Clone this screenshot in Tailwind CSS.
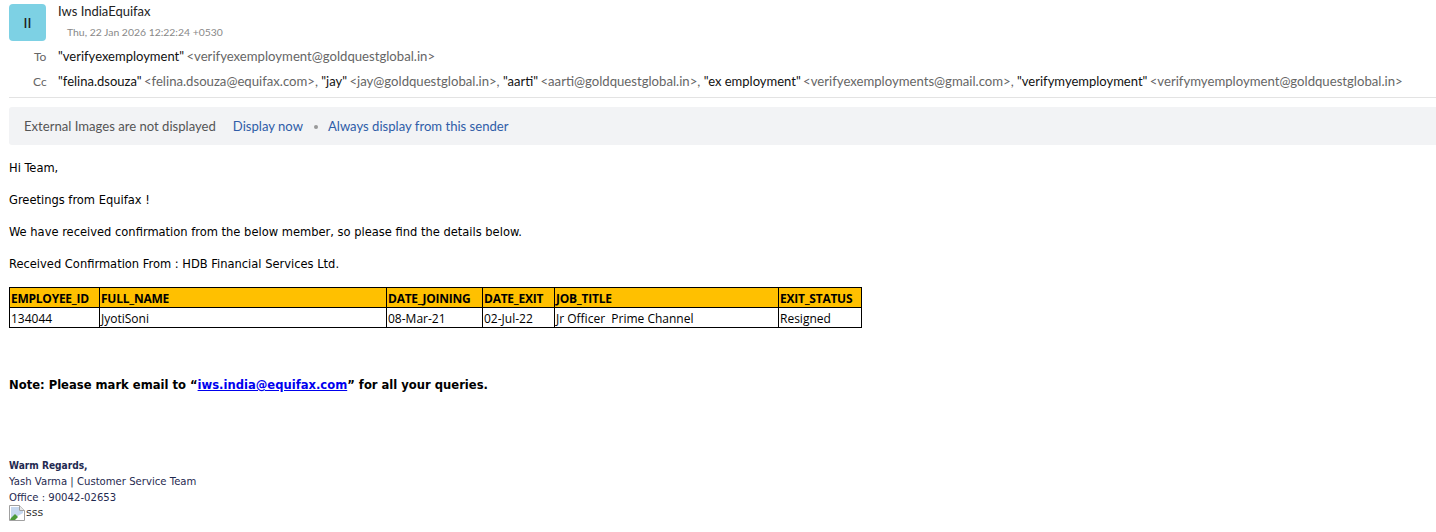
<!DOCTYPE html>
<html><head><meta charset="utf-8"><script src="https://cdn.jsdelivr.net/npm/@tailwindcss/browser@4"></script></head>
<body class="bg-white h-[532px] overflow-hidden font-['Lato',sans-serif]">
<div class="pl-[9px]">
  <div class="flex pt-1 h-[44px]">
    <div class="w-[37px] h-[37px] rounded-[4px] bg-[#7dd1e4] flex items-center justify-center text-[14px] font-medium text-[#222]">II</div>
    <div class="ml-[12px] -mt-[1px]">
      <div class="text-[13px] leading-[16px] text-[#222]">Iws IndiaEquifax</div>
      <div class="text-[10.4px] leading-[14px] text-[#888] mt-[6px] ml-[9px]">Thu, 22 Jan 2026 12:22:24 +0530</div>
    </div>
  </div>
  <div class="flex h-[25px] pt-[1px] items-center text-[13.15px] text-[#666] whitespace-nowrap">
    <div class="w-[37px] pl-[25px] text-[12px] text-[#666] shrink-0">To</div>
    <div class="ml-[12px]"><span class="text-[#111] text-[13px] mr-[-1px]">"verifyexemployment"</span> <span>&lt;verifyexemployment@goldquestglobal.in&gt;</span></div>
  </div>
  <div class="flex h-[24px] pt-[1px] items-center text-[13.15px] text-[#666] whitespace-nowrap">
    <div class="w-[37px] pl-[24px] text-[12px] text-[#666] shrink-0">Cc</div>
    <div class="ml-[12px]"><span class="text-[#111] text-[13px] mr-[-1px]">"felina.dsouza"</span> <span>&lt;felina.dsouza@equifax.com&gt;,</span> <span class="text-[#111] text-[13px] mr-[-1px]">"jay"</span> <span>&lt;jay@goldquestglobal.in&gt;,</span> <span class="text-[#111] text-[13px] mr-[-1px]">"aarti"</span> <span>&lt;aarti@goldquestglobal.in&gt;,</span> <span class="text-[#111] text-[13px] mr-[-1px]">"ex employment"</span> <span>&lt;verifyexemployments@gmail.com&gt;,</span> <span class="text-[#111] text-[13px] mr-[-1px]">"verifymyemployment"</span> <span>&lt;verifymyemployment@goldquestglobal.in&gt;</span></div>
  </div>
  <div class="border-t border-[#e3e3e3] mt-[4px]"></div>
  <div class="mt-[9px] h-[38px] bg-[#f2f3f5] rounded-l-[3px] flex items-center pl-[15px] pt-[2px] text-[13.1px]">
    <span class="text-[#555]">External Images are not displayed</span>
    <span class="ml-[17px] text-[#2f5da8]">Display now</span>
    <span class="ml-[11px] mr-[10px] w-[4px] h-[4px] rounded-full bg-[#999]"></span>
    <span class="text-[#2f5da8]">Always display from this sender</span>
  </div>
  <div class="mt-[15px] font-['DejaVu_Sans_Condensed','DejaVu_Sans',sans-serif] text-[12.78px] leading-[16px] text-[#000] flex flex-col gap-4">
    <p>Hi Team,</p>
    <p>Greetings from Equifax !</p>
    <p>We have received confirmation from the below member, so please find the details below.</p>
    <p>Received Confirmation From : HDB Financial Services Ltd.</p>
  </div>
  <table class="mt-[15px] border-collapse table-fixed w-[852px] font-['Open_Sans',sans-serif] text-[12px] leading-[16px] text-black">
    <colgroup><col class="w-[90px]"><col class="w-[287px]"><col class="w-[96px]"><col class="w-[72px]"><col class="w-[224px]"><col class="w-[83px]"></colgroup>
    <tr class="bg-[#ffc000] font-bold h-[20px] tracking-[-0.25px]">
      <td class="border border-black pl-[1px] pt-[3px] pb-0 whitespace-nowrap">EMPLOYEE_ID</td>
      <td class="border border-black pl-[1px] pt-[3px] pb-0">FULL_NAME</td>
      <td class="border border-black pl-[1px] pt-[3px] pb-0 whitespace-nowrap">DATE_JOINING</td>
      <td class="border border-black pl-[1px] pt-[3px] pb-0 whitespace-nowrap">DATE_EXIT</td>
      <td class="border border-black pl-[1px] pt-[3px] pb-0">JOB_TITLE</td>
      <td class="border border-black pl-[1px] pt-[3px] pb-0 whitespace-nowrap">EXIT_STATUS</td>
    </tr>
    <tr class="h-[20px]">
      <td class="border border-black pl-[1px] pt-[3px] pb-0">134044</td>
      <td class="border border-black pl-[1px] pt-[3px] pb-0">JyotiSoni</td>
      <td class="border border-black pl-[1px] pt-[3px] pb-0">08-Mar-21</td>
      <td class="border border-black pl-[1px] pt-[3px] pb-0">02-Jul-22</td>
      <td class="border border-black pl-[1px] pt-[3px] pb-0 whitespace-pre">Jr Officer  Prime Channel</td>
      <td class="border border-black pl-[1px] pt-[3px] pb-0">Resigned</td>
    </tr>
  </table>
  <p class="mt-[48px] font-['DejaVu_Sans_Condensed','DejaVu_Sans',sans-serif] text-[12.87px] leading-[18px] font-bold text-black">Note: Please mark email to “<a class="text-[#0000ee] underline">iws.india@equifax.com</a>” for all your queries.</p>
  <div class="mt-[64px] font-['DejaVu_Sans',sans-serif] text-[10.1px] leading-[16px] text-[#1f2a50]">
    <div class="font-bold font-['DejaVu_Sans_Condensed','DejaVu_Sans',sans-serif]">Warm Regards,</div>
    <div>Yash Varma | Customer Service Team</div>
    <div>Office : 90042-02653</div>
    <div class="flex items-center h-[16px] -mt-[1px] text-[#333] text-[11px]">
      <svg class="w-[16px] h-[16px] shrink-0" viewBox="0 0 16 16"><path d="M.5.5h10l5 5v10H.5z" fill="#fff" stroke="#a0a0a0"/><path d="M10.5.5v5h5" fill="#e8e8e8" stroke="#a0a0a0"/><path d="M2 2h8v4h4v2l-7 4-5 2z" fill="#c6d8ef"/><path d="M1 15l1-2 4-4 3 3-3 3z" fill="#4c9a3a"/></svg>
      <span class="ml-[1px]">sss</span>
    </div>
  </div>
</div>
</body></html>
